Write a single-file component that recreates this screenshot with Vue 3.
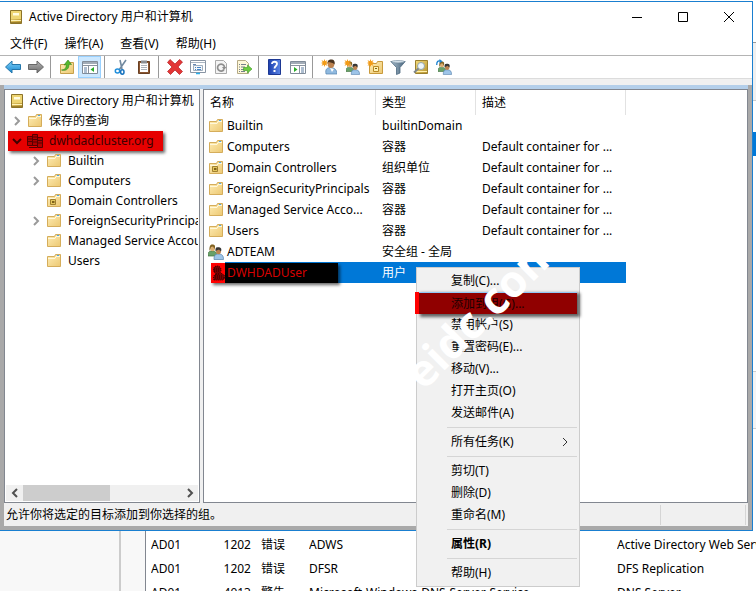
<script setup>
const menus = ['文件(F)', '操作(A)', '查看(V)', '帮助(H)']

const tools = [
  [{ id: 'back', label: '后退' }, { id: 'forward', label: '前进' }],
  [{ id: 'up', label: '上一级' }, { id: 'panel', label: '显示/隐藏控制台树', on: true }],
  [{ id: 'cut', label: '剪切' }, { id: 'paste', label: '粘贴' }],
  [
    { id: 'delete', label: '删除' },
    { id: 'props', label: '属性' },
    { id: 'refresh', label: '刷新' },
    { id: 'export', label: '导出列表' }
  ],
  [{ id: 'help', label: '帮助' }, { id: 'action', label: '显示/隐藏操作窗格' }],
  [
    { id: 'newuser', label: '新建用户' },
    { id: 'newgroup', label: '新建组' },
    { id: 'newou', label: '新建组织单位' },
    { id: 'filter', label: '筛选器' },
    { id: 'find', label: '查找' },
    { id: 'addgroup', label: '添加到组' }
  ]
]

const tree = [
  { text: '保存的查询', icon: 'folder', level: 1, arrow: 'right' },
  { text: 'dwhdadcluster.org', icon: 'domain', level: 1, arrow: 'down', marked: true },
  { text: 'Builtin', icon: 'folder', level: 2, arrow: 'right' },
  { text: 'Computers', icon: 'folder', level: 2, arrow: 'right' },
  { text: 'Domain Controllers', icon: 'ou', level: 2 },
  { text: 'ForeignSecurityPrincipals', icon: 'folder', level: 2, arrow: 'right' },
  { text: 'Managed Service Accounts', icon: 'folder', level: 2 },
  { text: 'Users', icon: 'folder', level: 2 }
]

const objects = [
  { name: 'Builtin', type: 'builtinDomain', desc: '', icon: 'folder' },
  { name: 'Computers', type: '容器', desc: 'Default container for ...', icon: 'folder' },
  { name: 'Domain Controllers', type: '组织单位', desc: 'Default container for ...', icon: 'ou' },
  { name: 'ForeignSecurityPrincipals', type: '容器', desc: 'Default container for ...', icon: 'folder' },
  { name: 'Managed Service Acco...', type: '容器', desc: 'Default container for ...', icon: 'folder' },
  { name: 'Users', type: '容器', desc: 'Default container for ...', icon: 'folder' },
  { name: 'ADTEAM', type: '安全组 - 全局', desc: '', icon: 'group' },
  { name: 'DWHDADUser', type: '用户', desc: '', icon: 'user', selected: true }
]

const contextMenu = [
  [
    { text: '复制(C)...' },
    { text: '添加到组(G)...', marked: true },
    { text: '禁用帐户(S)' },
    { text: '重置密码(E)...' },
    { text: '移动(V)...' },
    { text: '打开主页(O)' },
    { text: '发送邮件(A)' }
  ],
  [{ text: '所有任务(K)', sub: true }],
  [{ text: '剪切(T)' }, { text: '删除(D)' }, { text: '重命名(M)' }],
  [{ text: '属性(R)', bold: true }],
  [{ text: '帮助(H)' }]
]

const events = [
  ['AD01', '1202', '错误', 'ADWS', 'Active Directory Web Services'],
  ['AD01', '1202', '错误', 'DFSR', 'DFS Replication'],
  ['AD01', '4013', '警告', 'Microsoft-Windows-DNS-Server-Service', 'DNS Server']
]
</script>

<template>
  <div class="screen">
    <svg class="defs" aria-hidden="true">
      <defs>
        <linearGradient id="gFolder" x1="0" y1="0" x2="1" y2="1">
          <stop offset="0" stop-color="#ffedb4" /><stop offset="1" stop-color="#ecc873" />
        </linearGradient>
        <linearGradient id="gBlue" x1="0" y1="0" x2="0" y2="1">
          <stop offset="0" stop-color="#7fd0f8" /><stop offset="1" stop-color="#1687d0" />
        </linearGradient>
        <linearGradient id="gGrey" x1="0" y1="0" x2="0" y2="1">
          <stop offset="0" stop-color="#b5b5b5" /><stop offset="1" stop-color="#6b6b6b" />
        </linearGradient>
        <linearGradient id="gBook" x1="0" y1="0" x2="1" y2="1">
          <stop offset="0" stop-color="#f3dc7e" /><stop offset="1" stop-color="#b8942e" />
        </linearGradient>
        <linearGradient id="gHelp" x1="0" y1="0" x2="1" y2="0">
          <stop offset="0" stop-color="#1c3fae" /><stop offset="1" stop-color="#5c86e6" />
        </linearGradient>
        <linearGradient id="gFunnel" x1="0" y1="0" x2="1" y2="0">
          <stop offset="0" stop-color="#a8bccb" /><stop offset="1" stop-color="#45627a" />
        </linearGradient>
        <symbol id="console" viewBox="0 0 16 16">
          <path d="M2.500 1.500h11v13h-11z" fill="url(#gBook)" stroke="#8c7328" />
          <path d="M3 2h10v8H3z" fill="#eed573" />
          <path d="M5 4h6v2.500H5z" fill="#fffbe0" />
          <path d="M3 11.500h10" stroke="#fff3b8" />
          <path d="M3 13.500h10" stroke="#9c7f2b" />
        </symbol>
        <symbol id="folder" viewBox="0 0 16 16">
          <path d="M1.500 3.500h7l1-2h5v12h-13z" fill="url(#gFolder)" stroke="#d5ad5b" />
          <path d="M2 5.500h7l1-2h4" fill="none" stroke="#fff8dc" />
          <path d="M11 2.500h2" stroke="#4aa5e5" />
        </symbol>
        <symbol id="ou" viewBox="0 0 16 16">
          <use href="#folder" />
          <path d="M4.500 6.500h5v5h-5z" fill="#e5c75e" stroke="#a08030" />
          <path d="M6 8h2.500v2H6z" fill="#80621a" />
        </symbol>
        <symbol id="domain" viewBox="0 0 16 16">
          <path d="M5.500 1.500h5v11h-5zM.5 3.500h5v9h-5zM10.500 4.500h5v10h-5z" fill="#b00000" stroke="#580000" />
          <path d="M6 4h4M6 6.500h4M6 9h4M1 6h4M1 8.500h4M11 7.500h4M11 10h4M2 14.500h8" stroke="#580000" />
        </symbol>
        <symbol id="person" viewBox="0 0 16 16">
          <path d="M3 15c-1-5 1-6 4-6.500 4 0 7 2 7 6.500z" fill="#8fb9df" stroke="#5582ad" stroke-width=".7" />
          <path d="M7 9l2 4 2-3z" fill="#fff" />
          <ellipse cx="8" cy="5" rx="3.300" ry="4" fill="#bd8350" />
          <path d="M4.500 5C4 1 7 0 9 .5c3 .5 3 3.500 2.500 5C10 3.500 7 3.500 5.500 3z" fill="#4a3420" />
        </symbol>
        <symbol id="group" viewBox="0 0 16 16">
          <path d="M0 12c0-4 1-5 4-5s5 1 5 5z" fill="#69a069" stroke="#40723e" stroke-width=".7" />
          <ellipse cx="4.500" cy="4" rx="2.500" ry="3.200" fill="#dcae72" />
          <path d="M1.500 7C1 1 3 0 5 .5 8 1 7 4 6.500 5L5 2.500 3 3z" fill="#806323" />
          <path d="M6 15.500c0-4 1-5.500 4.500-5.500s5 1.500 5 5.500z" fill="#9dc4e8" stroke="#5681ab" stroke-width=".7" />
          <ellipse cx="10.500" cy="7" rx="2.500" ry="3.200" fill="#bd8350" />
          <path d="M7.500 7C7 3 9 3 11 3.200c3 .5 2.500 3 2 4.300L11 5.500z" fill="#363636" />
        </symbol>
        <symbol id="user" viewBox="0 0 16 16">
          <path d="M3 15c-1-4 0-5 2-6C1 6 2 1 6 1s5 4 3 7c3 1 5 2 5 5l-2 2z" fill="#780000" stroke="#260000" stroke-dasharray="1 1" />
          <path d="M3 4h6M3 6h5M4 11h8M4 13h9M5 9h4" stroke="#260000" stroke-dasharray="1 1" />
        </symbol>
        <symbol id="star" viewBox="0 0 16 16">
          <path d="M3.500 0l.8 2.300L6.500 1 5.300 3.200l2.200.8-2.200.8L6.500 7 4.300 5.700 3.500 8l-.8-2.300L.5 7l1.200-2.200L0 4l1.700-.8L.5 1l2.200 1.300z" fill="#f39b16" />
        </symbol>
        <symbol id="back" viewBox="0 0 16 16">
          <path d="M.5 8L7 2v3.500h8.500v5H7V14z" fill="url(#gBlue)" stroke="#2476aa" />
        </symbol>
        <symbol id="forward" viewBox="0 0 16 16">
          <path d="M15.500 8L9 2v3.500H.5v5H9V14z" fill="url(#gGrey)" stroke="#686868" />
        </symbol>
        <symbol id="up" viewBox="0 0 16 16">
          <path d="M1.500 5.500h5l2-2h6v11h-13z" fill="url(#gFolder)" stroke="#c6a04c" />
          <path d="M2.500 11c4 0 5-3 4.500-5.500L5 6l4-5 3.500 4.500-2.500-.2c0 4-2 7-7.500 5.700z" fill="#56b82c" stroke="#2f8317" stroke-width=".6" />
        </symbol>
        <symbol id="panel" viewBox="0 0 16 16">
          <path d="M.5 2.500h15v12H.5z" fill="#fff" stroke="#808c99" />
          <path d="M1 3h14v2H1z" fill="#a2acb7" />
          <path d="M1 6.500h14M6.500 7v7" stroke="#89939e" />
          <path d="M2 9h3M2 11h3M2 13h3" stroke="#5c7ca0" />
          <path d="M12 8v5L8.500 10.500z" fill="#29ac28" />
        </symbol>
        <symbol id="cut" viewBox="0 0 16 16">
          <path d="M7 1l2 9M13 1L6 11" stroke="#71899f" stroke-width="1.600" />
          <ellipse cx="4.500" cy="12" rx="2.200" ry="2" fill="#fff" stroke="#218fdb" stroke-width="1.500" />
          <ellipse cx="9.300" cy="13" rx="1.700" ry="2.200" fill="#fff" stroke="#1672be" stroke-width="1.500" />
        </symbol>
        <symbol id="paste" viewBox="0 0 16 16">
          <path d="M2.500 2.500h11v12h-11z" fill="#8b5631" stroke="#694023" />
          <path d="M4 4h8v9H4z" fill="#fff" />
          <path d="M5 1.500h6v3H5z" fill="#8a8f94" />
          <path d="M5 6.500h6M5 8.500h6M5 10.500h6" stroke="#aab2ba" />
        </symbol>
        <symbol id="delete" viewBox="0 0 16 16">
          <path d="M3 .5L8 5l4.500-4.500L15.500 3 11 8l4.500 4.500-3 3L8 11l-4.500 4.500-3-3L5 8 .5 3.500z" fill="#e33636" stroke="#b51f23" stroke-width=".7" />
        </symbol>
        <symbol id="props" viewBox="0 0 16 16">
          <path d="M.5 1.500h15v12H.5z" fill="#fff" stroke="#8995a4" />
          <path d="M1 3.500h14" stroke="#aab5c2" />
          <path d="M3.500 6.500h9v5h-9z" fill="#f3f7fb" stroke="#9faebe" />
          <path d="M3 5.500h3" stroke="#6486b3" />
          <path d="M5 8.500h1M5 10.500h1M7 8.500h4M7 10.500h4" stroke="#4784c5" />
          <path d="M6 14.500h4" stroke="#2bafe9" stroke-width="1.500" />
        </symbol>
        <symbol id="refresh" viewBox="0 0 16 16">
          <path d="M2.500 1.500h8l3 3v10h-11z" fill="#f4f4f4" stroke="#aaa" />
          <path d="M11 10.500A3.500 3.500 0 1 1 11.500 8" fill="none" stroke="#8e8e8e" stroke-width="1.700" />
          <path d="M9 8h4.500L11 11z" fill="#8e8e8e" />
        </symbol>
        <symbol id="export" viewBox="0 0 16 16">
          <path d="M1.500 1.500h8l3 3v10h-11z" fill="#fff8d9" stroke="#b5aa86" />
          <path d="M3 5.500h1M5 5.500h5M3 8h1M5 8h4M3 10.500h1M5 10.500h3M3 12.500h1M5 12.500h4" stroke="#77828d" />
          <path d="M7.500 8.500h4V6l4.500 4-4.500 4v-2.500h-4z" fill="#6dcc40" stroke="#3c9928" stroke-width=".6" />
        </symbol>
        <symbol id="help" viewBox="0 0 16 16">
          <path d="M1.500.5h12v15h-12z" fill="url(#gHelp)" stroke="#1d3893" />
          <path d="M5 5c0-3 5-3 5 0 0 2-2.500 2-2.500 4.500" fill="none" stroke="#fff" stroke-width="1.800" />
          <path d="M6.500 11h2v2h-2z" fill="#fff" />
        </symbol>
        <symbol id="action" viewBox="0 0 16 16">
          <path d="M.5 2.500h15v12H.5z" fill="#fff" stroke="#808c99" />
          <path d="M1 3h14v2H1z" fill="#a2acb7" />
          <path d="M1 6.500h14M9.500 7v7" stroke="#89939e" />
          <path d="M11 9h3M11 11h3M11 13h3" stroke="#5c7ca0" />
          <path d="M4 8v5l3.500-2.500z" fill="#29ac28" />
        </symbol>
        <symbol id="newuser" viewBox="0 0 16 16">
          <use href="#person" x="2" /><use href="#star" />
        </symbol>
        <symbol id="newgroup" viewBox="0 0 16 16">
          <use href="#group" x="2" y="2" width="14" height="14" /><use href="#star" />
        </symbol>
        <symbol id="newou" viewBox="0 0 16 16">
          <path d="M2.500 4.500h7l1-2h5v12h-13z" fill="url(#gFolder)" stroke="#c99a3c" />
          <path d="M6.500 7.500h5v5h-5z" fill="#fff2b0" stroke="#b88825" /><path d="M8 9.500h2" stroke="#7e5d16" />
          <use href="#star" />
        </symbol>
        <symbol id="filter" viewBox="0 0 16 16">
          <path d="M.8 2.500h14.400L10 8.500v5.500l-3.500 1.500v-7z" fill="url(#gFunnel)" stroke="#4b677f" stroke-width=".8" />
          <ellipse cx="8" cy="2.700" rx="6.500" ry="1.200" fill="#d5e2eb" stroke="#6e8799" stroke-width=".6" />
        </symbol>
        <symbol id="find" viewBox="0 0 16 16">
          <path d="M2.500 1.500h12v13h-12z" fill="url(#gBook)" stroke="#9b802f" />
          <path d="M3 12.500h11" stroke="#fff1ad" />
          <circle cx="8" cy="7" r="3.500" fill="#eef7fc" stroke="#93a4ac" />
          <path d="M5.500 9.500L1 13.500" stroke="#7f878b" stroke-width="2" />
        </symbol>
        <symbol id="addgroup" viewBox="0 0 16 16">
          <use href="#group" x="2" y="2" width="14" height="14" />
          <path d="M.7 6C.7 2.500 2 1.500 4 2" fill="none" stroke="#1f83d0" stroke-width="1.300" />
          <path d="M3.500 0l3 2.200-3 2z" fill="#1f83d0" />
        </symbol>
      </defs>
    </svg>

    <div class="upper">
      <main class="window">
        <header class="titlebar">
          <svg class="icon"><use href="#console" /></svg>
          <h1>Active Directory 用户和计算机</h1>
          <div class="controls">
            <button aria-label="最小化"><svg viewBox="0 0 12 12"><path d="M1 6.500h10" /></svg></button>
            <button aria-label="最大化"><svg viewBox="0 0 12 12"><path d="M1.500 1.500h9v9h-9z" /></svg></button>
            <button aria-label="关闭"><svg viewBox="0 0 12 12"><path d="M1 1l10 10M11 1L1 11" /></svg></button>
          </div>
        </header>
        <nav class="menubar">
          <button v-for="m in menus" :key="m">{{ m }}</button>
        </nav>
        <div class="toolbar">
          <div v-for="(g, i) in tools" :key="i" class="tools">
            <button v-for="t in g" :key="t.id" :class="{ on: t.on }" :aria-label="t.label">
              <svg class="icon"><use :href="'#' + t.id" /></svg>
            </button>
          </div>
        </div>
        <div class="frame">
          <div class="panes">
            <section class="pane treepane">
              <div class="root">
                <svg class="icon"><use href="#console" /></svg><span>Active Directory 用户和计算机</span>
              </div>
              <ul>
                <li v-for="n in tree" :key="n.text" :class="['level' + n.level, { marked: n.marked }]">
                  <svg class="chev" viewBox="0 0 12 12">
                    <path v-if="n.arrow === 'right'" d="M4 2l4 4-4 4" />
                    <path v-if="n.arrow === 'down'" d="M2 4l4 4 4-4" />
                  </svg>
                  <svg class="icon"><use :href="'#' + n.icon" /></svg>
                  <span>{{ n.text }}</span>
                </li>
              </ul>
              <div class="scroll">
                <button aria-label="向左滚动"><svg viewBox="0 0 12 12"><path d="M8 2L4 6l4 4" /></svg></button>
                <div class="track"><div class="thumb"></div></div>
                <button aria-label="向右滚动"><svg viewBox="0 0 12 12"><path d="M4 2l4 4-4 4" /></svg></button>
              </div>
            </section>
            <section class="pane listpane">
              <table class="objects">
                <thead>
                  <tr><th class="c-name">名称</th><th class="c-type">类型</th><th class="c-desc">描述</th></tr>
                </thead>
                <tbody>
                  <tr v-for="o in objects" :key="o.name" :class="{ selected: o.selected }">
                    <td>
                      <div class="name">
                        <svg class="icon"><use :href="'#' + o.icon" /></svg><span>{{ o.name }}</span>
                      </div>
                    </td>
                    <td>{{ o.type }}</td>
                    <td>{{ o.desc }}</td>
                  </tr>
                </tbody>
              </table>
            </section>
          </div>
          <footer class="status">
            <span class="message">允许你将选定的目标添加到你选择的组。</span>
            <span class="cell"></span>
          </footer>
        </div>
      </main>
      <aside class="edge">
        <div class="e1"></div><div class="e2"></div><div class="e3"></div>
        <div class="e4"></div><div class="e5"></div><div class="e6"></div>
      </aside>
    </div>

    <div class="lower">
      <div class="side"></div>
      <div class="gutter"></div>
      <table class="events">
        <tbody>
          <tr v-for="(e, i) in events" :key="i">
            <td v-for="(c, j) in e" :key="j" :class="'v' + j">{{ c }}</td>
          </tr>
        </tbody>
      </table>
    </div>

    <div class="context">
      <div v-for="(g, i) in contextMenu" :key="i" class="group">
        <button v-for="c in g" :key="c.text" :class="{ marked: c.marked, bold: c.bold }">
          <span>{{ c.text }}</span>
          <svg v-if="c.sub" viewBox="0 0 12 12"><path d="M4 2l4 4-4 4" /></svg>
        </button>
      </div>
      <div class="watermark">eidc.com</div>
    </div>
  </div>
</template>

<style>
body {
  background: #fff;
  overflow: hidden;
}
</style>

<style scoped>
.screen {
  position: relative;
  display: flex;
  flex-direction: column;
  height: 100vh;
  overflow: hidden;
  font: 12px/20px "Noto Sans", "Noto Sans CJK SC", sans-serif;
  color: #000;
  white-space: nowrap;
}
.screen * {
  box-sizing: border-box;
}
.defs {
  position: absolute;
  width: 0;
  height: 0;
}
button {
  font: inherit;
  color: inherit;
  background: none;
  border: 0;
  padding: 0;
}
.icon {
  width: 16px;
  height: 16px;
  flex: none;
}
.upper {
  flex: 1;
  min-height: 0;
  display: flex;
  padding-top: 1px;
}
.window {
  flex: 1;
  min-width: 0;
  display: flex;
  flex-direction: column;
  border: 1px solid #1a7fd0;
  border-left: 0;
  background: #fff;
}
.titlebar {
  display: flex;
  align-items: center;
  height: 30px;
  padding-left: 8px;
  flex: none;
}
h1 {
  flex: 1;
  margin: 0 0 0 5px;
  font-size: 12px;
  font-weight: 400;
}
.controls {
  display: flex;
}
.controls button {
  display: grid;
  place-items: center;
  width: 46px;
  height: 28px;
}
.controls svg {
  width: 12px;
  height: 12px;
  fill: none;
  stroke: #000;
}
.menubar {
  display: flex;
  gap: 17px;
  height: 24px;
  flex: none;
  padding-left: 10px;
  border-bottom: 1px solid #b4b4b4;
}
.toolbar {
  display: flex;
  height: 23px;
  flex: none;
  border-bottom: 1px solid #dcdcdc;
  padding-left: 1px;
}
.tools {
  display: flex;
  align-items: center;
}
.tools + .tools {
  margin-left: 3px;
  padding-left: 4px;
  border-left: 1px solid #999;
}
.tools button {
  display: grid;
  place-items: center;
  width: 23px;
  height: 22px;
}
.tools button.on {
  background: #cce8ff;
  border: 1px solid #99d1ff;
}
.frame {
  flex: 1;
  min-height: 0;
  display: flex;
  flex-direction: column;
  margin-top: 6px;
  border: 4px solid #a9a9a9;
  border-top: 0;
  box-shadow: 0 -6px #f0f0f0;
  background: #f0f0f0;
}
.panes {
  flex: 1;
  min-height: 0;
  display: flex;
  gap: 3px;
  border-top: 4px solid #b4cfea;
}
.pane {
  border: 1px solid #828790;
  background: #fff;
  overflow: hidden;
}
.treepane {
  width: 196px;
  flex: none;
  display: flex;
  flex-direction: column;
  padding: 1px;
}
.root {
  display: flex;
  align-items: center;
  gap: 5px;
  height: 20px;
  padding-left: 3px;
  overflow: hidden;
}
ul {
  flex: 1;
  margin: 0;
  padding: 0;
  list-style: none;
  overflow: hidden;
}
li {
  display: flex;
  align-items: center;
  height: 20px;
}
li .icon {
  margin: 0 6px 0 4px;
}
.chev {
  width: 12px;
  height: 12px;
  flex: none;
  fill: none;
  stroke: #9a9a9a;
  stroke-width: 2;
}
.level1 {
  padding-left: 5px;
}
.level2 {
  padding-left: 24px;
}
li.marked {
  width: fit-content;
  margin-left: 2px;
  padding: 0 9px 0 3px;
  background: #e60000;
  color: #3d0000;
  box-shadow: 2px 2px 3px rgba(0, 0, 0, 0.6);
}
li.marked .chev {
  stroke: #400000;
}
.scroll {
  display: flex;
  height: 16px;
  background: #f0f0f0;
}
.scroll button {
  display: grid;
  place-items: center;
  width: 17px;
}
.scroll svg {
  width: 12px;
  height: 12px;
  fill: none;
  stroke: #505050;
  stroke-width: 2;
}
.track {
  flex: 1;
}
.thumb {
  width: 55%;
  height: 100%;
  background: #cdcdcd;
}
.listpane {
  flex: 1;
  min-width: 0;
}
table {
  border-spacing: 0;
  table-layout: fixed;
}
.objects {
  width: 422px;
}
th {
  height: 25px;
  padding: 0 0 0 6px;
  font-weight: 400;
  text-align: left;
  border-right: 1px solid #e2e2e2;
}
.c-name {
  width: 172px;
}
.c-type {
  width: 100px;
}
.c-desc {
  width: 150px;
}
td {
  padding: 0;
}
.objects td {
  height: 21px;
  padding: 0 0 0 6px;
}
.objects td:first-child {
  padding-left: 4px;
}
.name {
  display: flex;
  align-items: center;
  gap: 3px;
  height: 21px;
}
.selected td {
  background: #0078d7;
  color: #fff;
}
.selected td:first-child {
  background: linear-gradient(90deg, #fff 21px, #0078d7 21px);
}
.selected .name {
  width: 127px;
  margin-left: 3px;
  height: 20px;
  gap: 0;
  background: linear-gradient(90deg, #f00 14px, #000 14px);
  color: #d80000;
  box-shadow: 2px 2px 3px rgba(0, 0, 0, 0.6);
}
.status {
  display: flex;
  align-items: stretch;
  height: 23px;
  flex: none;
  padding: 2px 2px 1px;
}
.message {
  flex: 1;
}
.cell {
  width: 86px;
  border-left: 1px solid #d5d5d5;
  border-right: 1px solid #d5d5d5;
}
.edge {
  width: 3px;
  display: flex;
  flex-direction: column;
}
.e1 {
  height: 42px;
  border-bottom: 1px solid #999;
}
.e2 {
  height: 58px;
  background: #f0f0f0;
  border-bottom: 1px solid #ccc;
}
.e3 {
  height: 31px;
}
.e4 {
  height: 24px;
  background: #0078d7;
}
.e5 {
  height: 216px;
  border-bottom: 1px solid #ccc;
}
.e6 {
  height: 57px;
  background: #f4f4f4;
  border-bottom: 1px solid #ccc;
}
.lower {
  display: flex;
  height: 60px;
  flex: none;
  overflow: hidden;
}
.side {
  width: 121px;
  flex: none;
  background: #f8f8f8;
  border-right: 2px solid #ccc;
}
.gutter {
  width: 25px;
  flex: none;
  background: #f8f8f8;
  border-right: 1px solid #828790;
}
.events {
  width: 700px;
  flex: none;
  margin: 2px 0 0 5px;
  align-self: flex-start;
}
.events td {
  height: 24px;
  overflow: hidden;
}
.v0 {
  width: 58px;
}
.v1 {
  width: 42px;
  text-align: right;
}
.events .v2 {
  width: 58px;
  padding-left: 10px;
}
.v3 {
  width: 308px;
}
.context {
  position: absolute;
  left: 416px;
  top: 267px;
  width: 164px;
  padding: 2px;
  border: 1px solid #ccc;
  background: #f1f1f1;
}
.group + .group::before {
  content: "";
  display: block;
  height: 1px;
  margin: 3px 0 3px 28px;
  background: #d5d5d5;
}
.group button {
  display: flex;
  align-items: center;
  justify-content: space-between;
  width: 100%;
  height: 22px;
  padding: 0 6px 0 32px;
}
.group svg {
  width: 12px;
  height: 12px;
  fill: none;
  stroke: #333;
}
.group button.bold {
  font-weight: 700;
}
.group button.marked {
  background: #900000;
  border-top: 1px solid #90c8f6;
  color: #1c0000;
  box-shadow: -4px 0 #f00, 2px 2px 3px 1px rgba(0, 0, 0, 0.6);
}
.watermark {
  position: absolute;
  left: -36px;
  top: 20px;
  width: 200px;
  font: 700 44px/44px "Open Sans", sans-serif;
  color: #fff;
  text-align: center;
  transform: rotate(-45deg);
  pointer-events: none;
}
</style>
